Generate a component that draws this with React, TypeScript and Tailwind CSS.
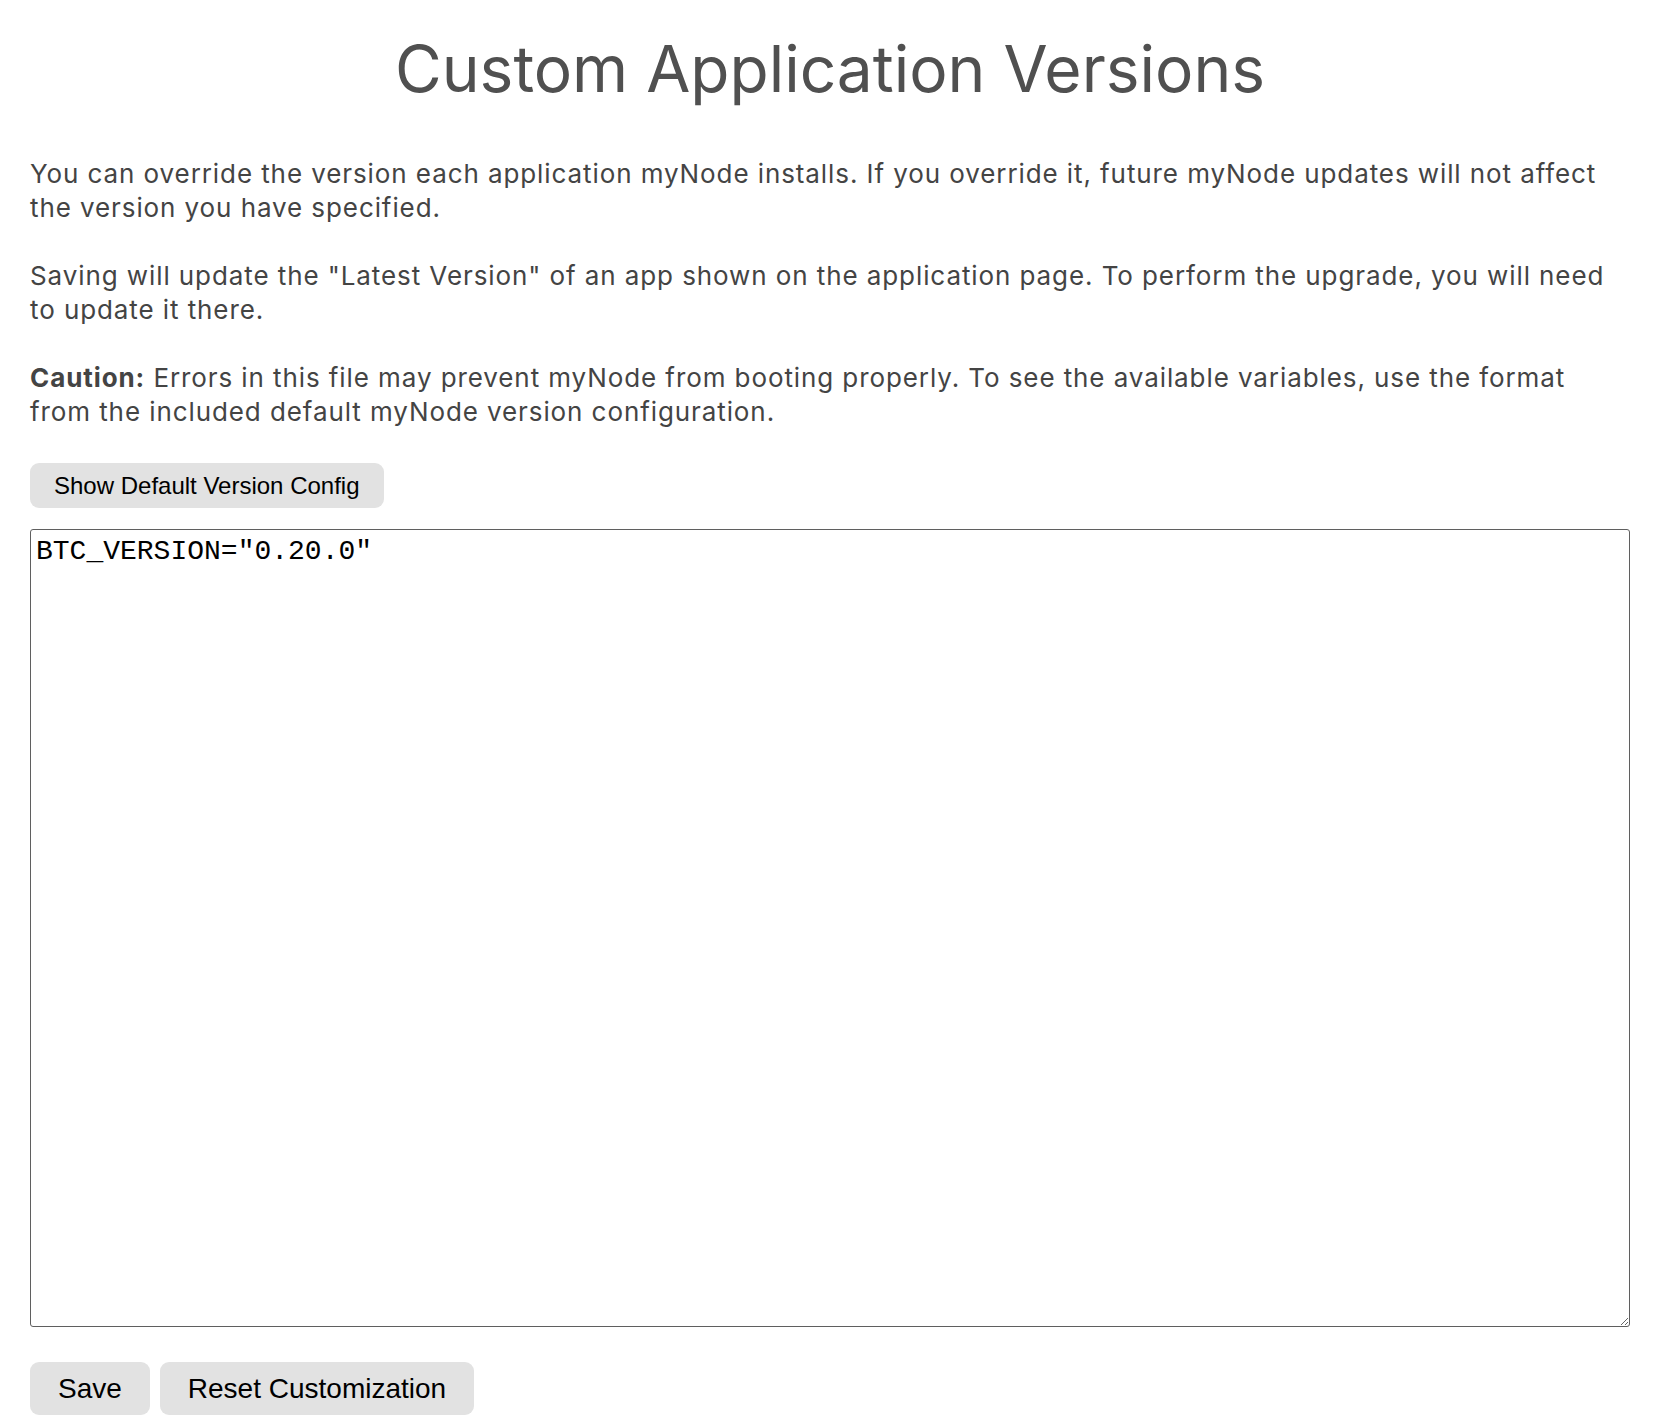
import { useState } from "react"

export default function App() {
  const [config, setConfig] = useState('BTC_VERSION="0.20.0"')

  return (
    <div className="min-h-screen bg-white pl-[30px] pr-[32px] pt-[30px] pb-[12px] font-['Inter',sans-serif] text-[#444444]">
      <h1 className="text-center text-[64px] leading-[77px] font-normal text-[#505050]">Custom Application Versions</h1>

      <div className="mt-[50px] text-[26px] leading-[34px] tracking-[0.035em]">
        <p>
          You can override the version each application myNode installs. If you override it, future myNode updates
          will not affect the version you have specified.
        </p>
        <p className="mt-[34px]">
          Saving will update the "Latest Version" of an app shown on the application page. To perform the upgrade, you
          will need to update it there.
        </p>
        <p className="mt-[34px]">
          <b className="font-bold">Caution:</b> Errors in this file may prevent myNode from booting properly. To see the
          available variables, use the format from the included default myNode version configuration.
        </p>
      </div>

      <button className="mt-[34px] h-[45px] rounded-[9px] bg-[#e2e2e2] px-[24px] font-['Liberation_Sans',Arial,sans-serif] text-[24px] text-black">
        Show Default Version Config
      </button>

      <textarea
        value={config}
        onChange={(e) => setConfig(e.target.value)}
        spellCheck={false}
        className="mt-[21px] block h-[798px] w-full rounded-[3px] border border-[#5f5f5f] px-[5px] pt-[5px] pb-[3px] font-['Liberation_Mono','Courier_New',monospace] text-[28px] leading-[34px] text-black outline-none"
      />

      <div className="mt-[35px] flex gap-[10px]">
        <button className="h-[53px] rounded-[9px] bg-[#e2e2e2] px-[28px] font-['Liberation_Sans',Arial,sans-serif] text-[28px] text-black">
          Save
        </button>
        <button className="h-[53px] rounded-[9px] bg-[#e2e2e2] px-[28px] font-['Liberation_Sans',Arial,sans-serif] text-[28px] text-black">
          Reset Customization
        </button>
      </div>
    </div>
  )
}
